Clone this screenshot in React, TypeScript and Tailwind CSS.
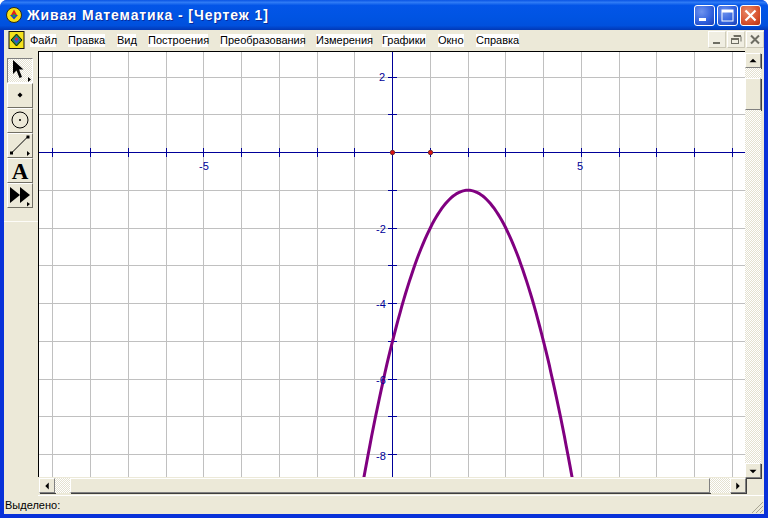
import type { ReactNode } from 'react'

const MENU = [
  ['Файл', 'w-[26px] ml-[26px]'],
  ['Правка', 'w-[37px] ml-[12px]'],
  ['Вид', 'w-[19px] ml-[12px]'],
  ['Построения', 'w-[60px] ml-[12px]'],
  ['Преобразования', 'w-[84px] ml-[12px]'],
  ['Измерения', 'w-[55px] ml-[12px]'],
  ['Графики', 'w-[44px] ml-[11px]'],
  ['Окно', 'w-[26px] ml-[12px]'],
  ['Справка', 'w-[43px] ml-[12px]'],
] as const

const OX = 392
const OY = 152
const UNIT = 37.75
const COLS = Array.from({ length: 20 }, (_, i) => i - 9)
const ROWS = Array.from({ length: 12 }, (_, i) => i - 3)

// y = -(x - 2)^2 - 1, sampled in screen coordinates
const curve = Array.from({ length: 121 }, (_, i) => {
  const x = -1 + (i / 120) * 6
  const y = -(x - 2) * (x - 2) - 1
  return `${(OX + 0.5 + x * UNIT).toFixed(1)},${(OY + 0.5 - y * UNIT).toFixed(1)}`
}).join(' ')

const dither = 'bg-[repeating-conic-gradient(#ffffff_0_25%,#e4e1d0_0_50%)] bg-[length:2px_2px]'
const bevel = 'border border-t-white border-l-white border-r-[#808080] border-b-[#808080] bg-[#ece9d8] shadow-[1px_1px_0_#404040]'

function ToolBtn({ children, pressed }: { children: ReactNode; pressed?: boolean }) {
  return (
    <div
      className={`flex h-[25px] w-[26px] items-center justify-center border ${
        pressed
          ? `border-t-[#808080] border-l-[#808080] border-r-white border-b-white ${dither}`
          : 'border-t-white border-l-white border-r-[#716f64] border-b-[#716f64]'
      }`}
    >
      <svg width="24" height="23" viewBox="0 0 24 23">
        {children}
      </svg>
    </div>
  )
}

function TitleBtn({ children, close }: { children: ReactNode; close?: boolean }) {
  return (
    <div
      className={`flex h-[21px] w-[21px] items-center justify-center rounded-[3px] border border-white ${
        close
          ? 'bg-[radial-gradient(circle_at_35%_30%,#e88a6a,#d8522e_60%,#b5300f)]'
          : 'bg-[radial-gradient(circle_at_35%_30%,#6f93ee,#2f5fdc_60%,#1c3fb4)]'
      }`}
    >
      <svg width="19" height="19" viewBox="0 0 19 19">
        {children}
      </svg>
    </div>
  )
}

function MdiBtn({ children }: { children: ReactNode }) {
  return (
    <div className="flex h-[17px] w-[18px] items-center justify-center border border-t-white border-l-white border-r-[#d0cdbc] border-b-[#c8c5b4] bg-[#f0eee2]">
      <svg width="14" height="13" viewBox="0 0 14 13" fill="none" stroke="#6e6e64">
        {children}
      </svg>
    </div>
  )
}

function Arrow({ dir }: { dir: 'up' | 'down' | 'left' | 'right' }) {
  const pts = {
    up: '4,9 12,9 8,5',
    down: '4,6 12,6 8,10',
    left: '10,3.5 10,11.5 6,7.5',
    right: '6,3.5 6,11.5 10,7.5',
  }[dir]
  return (
    <svg width="14" height="14" viewBox="0 0 16 15">
      <polygon points={pts} fill="#000" />
    </svg>
  )
}

function ScrollBtn({ dir }: { dir: 'up' | 'down' | 'left' | 'right' }) {
  return (
    <div className={`flex h-[15px] w-[16px] shrink-0 items-center justify-center ${bevel}`}>
      <Arrow dir={dir} />
    </div>
  )
}

export default function App() {
  return (
    <div className="flex h-[518px] w-[768px] flex-col overflow-hidden rounded-t-[7px] bg-[#0831d9] font-['Liberation_Sans',sans-serif]">
      {/* title bar */}
      <div className="flex h-[30px] shrink-0 items-center bg-[linear-gradient(180deg,#0a54e4_0%,#2f7bf5_8%,#0355e8_18%,#0054e3_55%,#0050dd_85%,#0238b5_100%)] pl-[6px] pr-[7px]">
        <svg width="16" height="16" viewBox="0 0 16 16">
          <circle cx="8" cy="8" r="7.5" fill="#f7e017" stroke="#2a2a1a" />
          <polygon points="8,2.5 11,8 5,8" fill="#e02020" />
          <polygon points="4,8 12,8 8,12.5" fill="#1a3fd0" />
          <circle cx="8" cy="8.5" r="1.5" fill="#20a040" />
        </svg>
        <span className="ml-[5px] text-[14px] font-bold tracking-[0.9px] text-white [text-shadow:1px_1px_0_#0a2a9a]">
          Живая Математика - [Чертеж 1]
        </span>
        <div className="ml-auto flex gap-[2px]">
          <TitleBtn>
            <rect x="4" y="12" width="7" height="3" fill="#fff" />
          </TitleBtn>
          <TitleBtn>
            <rect x="4" y="4" width="11" height="11" fill="none" stroke="#fff" />
            <rect x="4" y="4" width="11" height="2.5" fill="#fff" />
          </TitleBtn>
          <TitleBtn close>
            <path d="M4.5 4.5 L14.5 14.5 M14.5 4.5 L4.5 14.5" stroke="#fff" strokeWidth="2.2" />
          </TitleBtn>
        </div>
      </div>

      <div className="ml-[4px] mr-[4px] mb-[4px] flex min-h-0 flex-1 flex-col bg-[#ece9d8]">
        {/* menu bar */}
        <div className="relative flex h-[21px] shrink-0 items-center text-[11px] text-black">
          <svg className="absolute left-[4px] top-[1px]" width="17" height="18" viewBox="0 0 17 18">
            <rect x="1" y="0.5" width="15" height="17" fill="#f4e21c" stroke="#111" />
            <polygon points="8.5,3 14,9 8.5,15 3,9" fill="#1f8f3f" stroke="#111" />
            <polygon points="8.5,5 11.5,9 8.5,13 5.5,9" fill="#2f55d8" />
            <circle cx="8.5" cy="8" r="1.5" fill="#e02a2a" />
          </svg>
          {MENU.map(([label, cls]) => (
            <span key={label} className={`${cls} h-[13px] whitespace-nowrap bg-white leading-[13px]`}>
              {label}
            </span>
          ))}
          <div className="absolute right-0 top-[1px] flex gap-px">
            <MdiBtn>
              <path d="M3 10 H10" strokeWidth="2" />
            </MdiBtn>
            <MdiBtn>
              <path d="M5 3.5 H12 V8.5 M5 2 V3.5 M5 2.5 H12" />
              <rect x="2.5" y="5.5" width="7" height="5" />
              <path d="M2.5 6.5 H9.5" />
            </MdiBtn>
            <MdiBtn>
              <path d="M3 2.5 L11 10.5 M11 2.5 L3 10.5" strokeWidth="2" />
            </MdiBtn>
          </div>
        </div>

        {/* workspace */}
        <div className="flex min-h-0 flex-1">
          <div className="w-[34px] shrink-0 pl-[3px] pt-[7px]">
            <ToolBtn pressed>
              <polygon points="5,1 5,15 8.5,11.5 11.5,19 14,18 11,10.5 15.5,10.5" fill="#000" />
              <polygon points="20,18 23,20.5 20,23" fill="#000" />
            </ToolBtn>
            <ToolBtn>
              <polygon points="12,8.5 14.5,11 12,13.5 9.5,11" fill="#000" />
            </ToolBtn>
            <ToolBtn>
              <circle cx="12" cy="11" r="8" fill="none" stroke="#000" />
              <path d="M11 11 H13 M12 10 V12" stroke="#000" />
            </ToolBtn>
            <ToolBtn>
              <path d="M3.5 19 L20 2.5" stroke="#000" />
              <rect x="2" y="17.5" width="3" height="3" fill="#000" />
              <rect x="18.5" y="1.5" width="3" height="3" fill="#000" />
              <polygon points="19,17 22,19.5 19,22" fill="#000" />
            </ToolBtn>
            <ToolBtn>
              <text x="12" y="20" textAnchor="middle" fontSize="23" fontWeight="700" fontFamily="'Liberation Serif', serif" fill="#000">
                A
              </text>
            </ToolBtn>
            <ToolBtn>
              <polygon points="2,3 2,19 12,11" fill="#000" />
              <polygon points="12,3 12,19 22,11" fill="#000" />
              <polygon points="19,18 22,20 19,22.5" fill="#000" />
            </ToolBtn>
            <div className="mt-[13px] -ml-[3px] h-px w-[34px] bg-[#fdfcf8]" />
          </div>

          <div className="flex min-w-0 flex-1 flex-col border-b border-white">
            <div className="flex min-h-0 flex-1">
              {/* sketch canvas */}
              <div className="h-[426px] w-[707px] shrink-0 border-l border-t border-black bg-white">
                <svg width="706" height="425" viewBox="39 52 706 425" className="block">
                  <g shapeRendering="crispEdges">
                    {COLS.map((k) => {
                      const x = Math.round(OX + k * UNIT) + 0.5
                      return <line key={k} x1={x} x2={x} y1="52" y2="477" stroke="#c0c0c0" />
                    })}
                    {ROWS.map((k) => {
                      const y = Math.round(OY + k * UNIT) + 0.5
                      return <line key={k} y1={y} y2={y} x1="39" x2="745" stroke="#c0c0c0" />
                    })}
                    <line x1="39" x2="745" y1="152.5" y2="152.5" stroke="#000099" />
                    <line x1="392.5" x2="392.5" y1="52" y2="477" stroke="#000099" />
                    {COLS.map((k) => {
                      const x = Math.round(OX + k * UNIT) + 0.5
                      return <line key={k} x1={x} x2={x} y1="148" y2="157" stroke="#000099" />
                    })}
                    {ROWS.map((k) => {
                      const y = Math.round(OY + k * UNIT) + 0.5
                      return <line key={k} x1="388" x2="397" y1={y} y2={y} stroke="#000099" />
                    })}
                  </g>
                  <polyline points={curve} fill="none" stroke="#800080" strokeWidth="3" />
                  <circle cx="392.5" cy="152.5" r="2.2" fill="#e01010" stroke="#703030" />
                  <circle cx="430.5" cy="152.5" r="2.2" fill="#e01010" stroke="#703030" />
                  <g fontSize="11" fill="#000099" fontFamily="'Liberation Sans', sans-serif">
                    <text x="199" y="170">-5</text>
                    <text x="577" y="170">5</text>
                    <text x="379" y="81">2</text>
                    <text x="376" y="233">-2</text>
                    <text x="376" y="308">-4</text>
                    <text x="376" y="384">-6</text>
                    <text x="376" y="460">-8</text>
                  </g>
                </svg>
              </div>
              {/* vertical scrollbar */}
              <div className="flex w-[16px] shrink-0 flex-col pt-[2px]">
                <ScrollBtn dir="up" />
                <div className={`h-[10px] shrink-0 ${dither}`} />
                <div className={`h-[32px] shrink-0 ${bevel}`} />
                <div className={`min-h-0 flex-1 ${dither}`} />
                <ScrollBtn dir="down" />
              </div>
            </div>
            {/* horizontal scrollbar */}
            <div className="flex h-[17px] shrink-0 pl-px pr-[18px]">
              <ScrollBtn dir="left" />
              <div className={`h-[15px] w-[15px] shrink-0 ${dither}`} />
              <div className={`h-[15px] w-[640px] shrink-0 ${bevel}`} />
              <div className={`h-[15px] min-w-0 flex-1 ${dither}`} />
              <ScrollBtn dir="right" />
            </div>
          </div>
        </div>

        {/* status bar */}
        <div className="relative flex h-[18px] shrink-0 items-center pl-px text-[11px] text-black">
          Выделено:
          <svg className="absolute bottom-0 right-0" width="13" height="13" viewBox="0 0 13 13" stroke="#a8a594">
            <path d="M12 1 L1 12 M12 5 L5 12 M12 9 L9 12" />
          </svg>
        </div>
      </div>
    </div>
  )
}
